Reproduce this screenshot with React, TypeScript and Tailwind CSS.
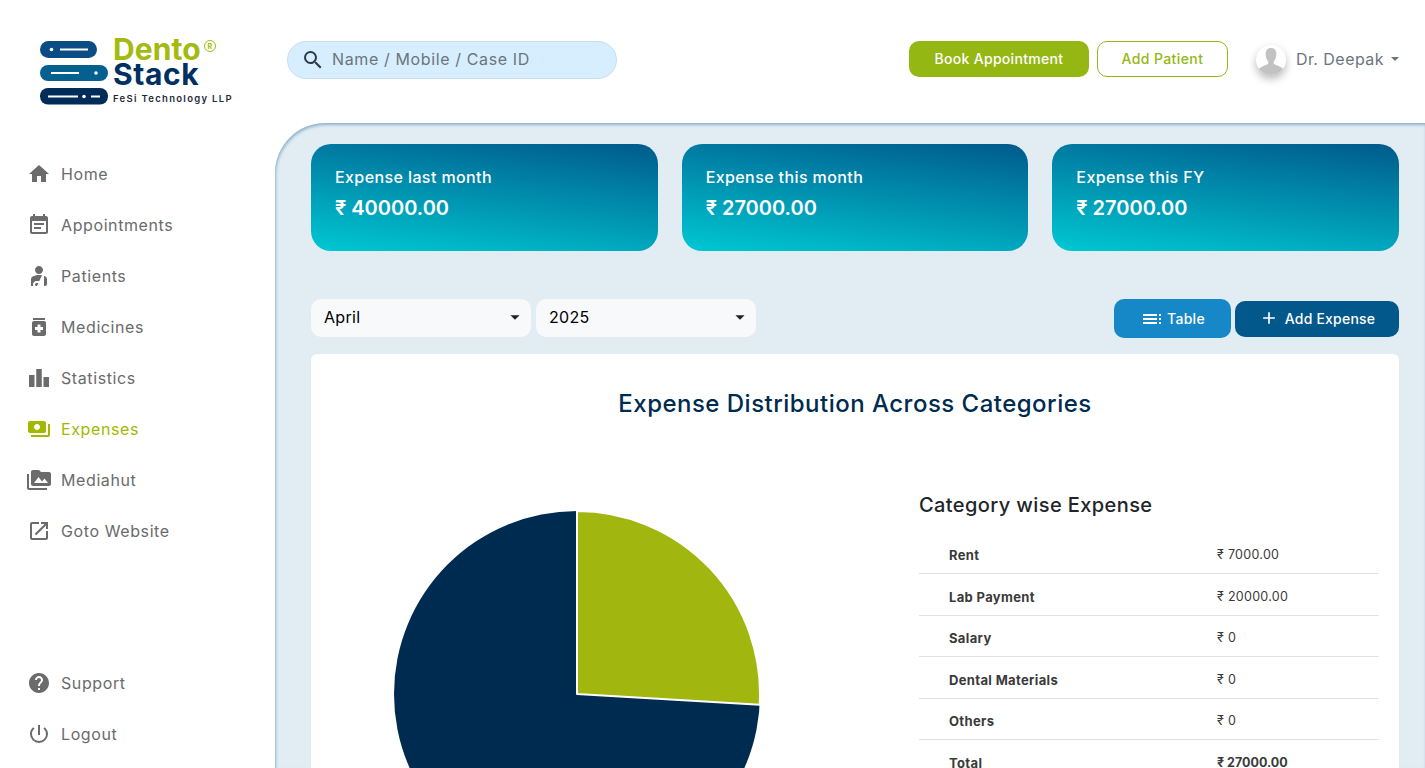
import React from "react";
import {
  MdHome, MdEventNote, MdPersonalInjury, MdMedication, MdLeaderboard, MdPayments,
  MdPermMedia, MdOpenInNew, MdHelp, MdPowerSettingsNew, MdSearch, MdToc, MdAdd, MdArrowDropDown,
} from "react-icons/md";

const font = "font-['Inter','Liberation_Sans',sans-serif]";

function Logo() {
  return (
    <div className="flex h-[123px] shrink-0 items-start pl-[40px] pt-[37px]">
      <svg width="69" height="68" viewBox="0 0 69 68" className="mt-[4px] shrink-0">
        <rect x="0" y="0" width="57" height="17" rx="8.5" fill="#0b4c85" />
        <circle cx="11.5" cy="8.5" r="1.8" fill="#fff" />
        <rect x="20" y="7.5" width="28" height="2" fill="#fff" />
        <rect x="0" y="24" width="68" height="16" rx="8" fill="#04608f" />
        <rect x="11" y="31" width="28" height="2" fill="#fff" />
        <circle cx="56" cy="32" r="1.8" fill="#fff" />
        <rect x="0" y="47" width="68" height="16.5" rx="8" fill="#002c59" />
        <rect x="8" y="54.5" width="30" height="2" fill="#fff" />
        <circle cx="44" cy="55.5" r="1.8" fill="#fff" />
        <rect x="51" y="54.5" width="9" height="2" fill="#fff" />
      </svg>
      <div className="ml-[4px] flex flex-col">
        <div className="flex items-start">
          <span className="h-[25px] text-[30px] font-bold leading-[25px] tracking-[0.1px] text-[#a3ba10]">Dento</span>
          <span className="ml-[3px] mt-[3px] flex h-[12px] w-[12px] items-center justify-center rounded-full border-[1.5px] border-[#a3ba10] text-[7px] font-bold leading-none text-[#a3ba10]">R</span>
        </div>
        <span className="h-[24px] text-[30px] font-bold leading-[24px] tracking-[0.6px] text-[#003062]">Stack</span>
        <span className="mt-[7px] whitespace-nowrap text-[9.5px] font-semibold leading-[12px] tracking-[1.3px] text-[#1f2a38]">FeSi Technology LLP</span>
      </div>
    </div>
  );
}

function NavItem({ icon: Icon, label, active }: { icon: any; label: string; active?: boolean }) {
  return (
    <div className={`flex h-[51px] items-center pl-[27px] ${active ? "text-[#a3b900]" : "text-[#6b6b6b]"}`}>
      <span className="flex w-[24px] shrink-0 items-center justify-center">
        <Icon size={24} />
      </span>
      <span className="ml-[10px] text-[16px] leading-[24px] tracking-[0.6px]">{label}</span>
    </div>
  );
}

function StatCard({ title, value }: { title: string; value: string }) {
  return (
    <div className="flex h-[107px] flex-col rounded-[20px] bg-[linear-gradient(187deg,#005a8c,#00c8d3)] pl-[24px] pt-[21px] text-white">
      <span className="text-[16px] font-medium leading-[24px] tracking-[0.4px]">{title}</span>
      <span className="mt-[3.5px] text-[20px] font-semibold leading-[30px] tracking-[0px]">{value}</span>
    </div>
  );
}

function Select({ value }: { value: string }) {
  return (
    <div className="flex h-[38px] w-[220px] items-center justify-between rounded-[10px] bg-[#f7f9fb] pb-[2px] pl-[13px] pr-[5px] text-[16px] tracking-[0.3px] text-black">
      <span>{value}</span>
      <MdArrowDropDown size={22} className="text-[#222]" />
    </div>
  );
}

const rows = [
  { name: "Rent", val: "₹ 7000.00" },
  { name: "Lab Payment", val: "₹ 20000.00" },
  { name: "Salary", val: "₹ 0" },
  { name: "Dental Materials", val: "₹ 0" },
  { name: "Others", val: "₹ 0" },
];

function Pie() {
  return (
    <svg width="368" height="368" viewBox="0 0 368 368" className="shrink-0">
      <circle cx="184" cy="184" r="183" fill="#002b50" />
      <path d="M184 184 L184 1 A183 183 0 0 1 366.7 194.7 Z" fill="#a2b610" stroke="#fff" strokeWidth="2" strokeLinejoin="round" />
    </svg>
  );
}

export default function App() {
  return (
    <div className={`flex h-screen w-full overflow-hidden bg-white ${font}`}>
      <aside className="flex w-[275px] shrink-0 flex-col">
        <Logo />
        <nav className="mt-[25.5px] flex flex-col">
          <NavItem icon={MdHome} label="Home" />
          <NavItem icon={MdEventNote} label="Appointments" />
          <NavItem icon={MdPersonalInjury} label="Patients" />
          <NavItem icon={MdMedication} label="Medicines" />
          <NavItem icon={MdLeaderboard} label="Statistics" />
          <NavItem icon={MdPayments} label="Expenses" active />
          <NavItem icon={MdPermMedia} label="Mediahut" />
          <NavItem icon={MdOpenInNew} label="Goto Website" />
        </nav>
        <div className="mt-auto flex flex-col pb-[8.5px]">
          <NavItem icon={MdHelp} label="Support" />
          <NavItem icon={MdPowerSettingsNew} label="Logout" />
        </div>
      </aside>

      <div className="flex min-w-0 flex-1 flex-col">
        <header className="flex h-[123px] shrink-0 items-start pl-[12px] pr-[26px] pt-[41px]">
          <div className="flex h-[38px] w-[330px] items-center rounded-[19px] border border-[#c4e0f2] bg-[#d6eeff] pl-[13px]">
            <MdSearch size={24} className="text-[#2d3a45]" />
            <span className="ml-[7px] pb-[2px] text-[16px] tracking-[0.62px] text-[#6c757d]">Name / Mobile / Case ID</span>
          </div>
          <div className="ml-auto flex h-[36px] w-[180px] items-center justify-center rounded-[10px] bg-[#94b714] pb-[2px] text-[14px] font-medium tracking-[0.3px] text-white">Book Appointment</div>
          <div className="ml-[8px] flex h-[36px] w-[131px] items-center justify-center rounded-[10px] border border-[#94b714] bg-white pb-[2px] text-[14px] font-medium tracking-[0.4px] text-[#94b714]">Add Patient</div>
          <div className="ml-[28px] flex h-[36px] items-center">
            <div className="mt-[2px] h-[30px] w-[30px] overflow-hidden rounded-full bg-white shadow-[0_4px_8px_rgba(0,0,0,0.28)]">
              <svg viewBox="0 0 30 30" width="30" height="30">
                <path d="M15 3c4 0 5.600 3 5.400 6.600-.2 3-1.200 5.400-2.700 6.800v2.400c1.600 1.200 7.300 2.600 9.300 5.200v6H3v-6c2-2.600 7.700-4 9.300-5.200v-2.400c-1.500-1.400-2.500-3.800-2.700-6.800C9.400 6 11 3 15 3z" fill="#c2c2c2" />
              </svg>
            </div>
            <span className="ml-[10px] text-[16px] tracking-[0.45px] text-[#6c757d]">Dr. Deepak</span>
            <span className="ml-[7px] h-0 w-0 border-x-[4px] border-t-[4px] border-x-transparent border-t-[#6c757d]" />
          </div>
        </header>

        <main className="min-h-0 flex-1 rounded-tl-[50px] bg-[#e2ecf3] pl-[36px] pr-[26px] pt-[21px] shadow-[inset_1px_2px_3px_rgba(90,145,180,0.6)]">
          <div className="grid grid-cols-3 gap-[24px]">
            <StatCard title="Expense last month" value="₹ 40000.00" />
            <StatCard title="Expense this month" value="₹ 27000.00" />
            <StatCard title="Expense this FY" value="₹ 27000.00" />
          </div>

          <div className="mt-[48px] flex items-start">
            <Select value="April" />
            <div className="ml-[5px]"><Select value="2025" /></div>
            <div className="ml-auto flex h-[39px] w-[117px] items-center justify-center rounded-[10px] bg-[#1788c7] text-[14px] font-medium tracking-[0.3px] text-white">
              <MdToc size={24} />
              <span className="ml-[3px]">Table</span>
            </div>
            <div className="ml-[4px] mt-[2px] flex h-[36px] w-[164px] items-center justify-center rounded-[10px] bg-[#02588a] pb-[2px] text-[14px] font-medium tracking-[0.2px] text-white">
              <MdAdd size={20} />
              <span className="ml-[6px]">Add Expense</span>
            </div>
          </div>

          <section className="mt-[16px] rounded-t-[6px] bg-white">
            <h2 className="pt-[32px] text-center text-[24px] font-medium leading-[36px] tracking-[0.48px] text-[#002b50]">Expense Distribution Across Categories</h2>
            <div className="mt-[39px] flex">
              <div className="ml-[82px] mt-[49px] h-[400px]"><Pie /></div>
              <div className="ml-[158px] w-[460px] pt-[29px]">
                <h3 className="text-[20px] font-medium leading-[30px] tracking-[0.4px] text-[#212529]">Category wise Expense</h3>
                <div className="mt-[12.5px] flex flex-col">
                  {rows.map((r) => (
                    <div key={r.name} className="flex h-[41.5px] items-center border-b border-[#dee2e6] pt-[6px] text-[#3a3a3a]">
                      <span className="ml-[30px] w-[268px] text-[13px] font-bold tracking-[0.35px]">{r.name}</span>
                      <span className="text-[12.5px] tracking-[0.3px]">{r.val}</span>
                    </div>
                  ))}
                  <div className="flex h-[41.5px] items-center pt-[6px] text-[#3a3a3a]">
                    <span className="ml-[30px] w-[268px] text-[13px] font-bold tracking-[0.35px]">Total</span>
                    <span className="text-[12.5px] font-bold">₹ 27000.00</span>
                  </div>
                </div>
              </div>
            </div>
          </section>
        </main>
      </div>
    </div>
  );
}
